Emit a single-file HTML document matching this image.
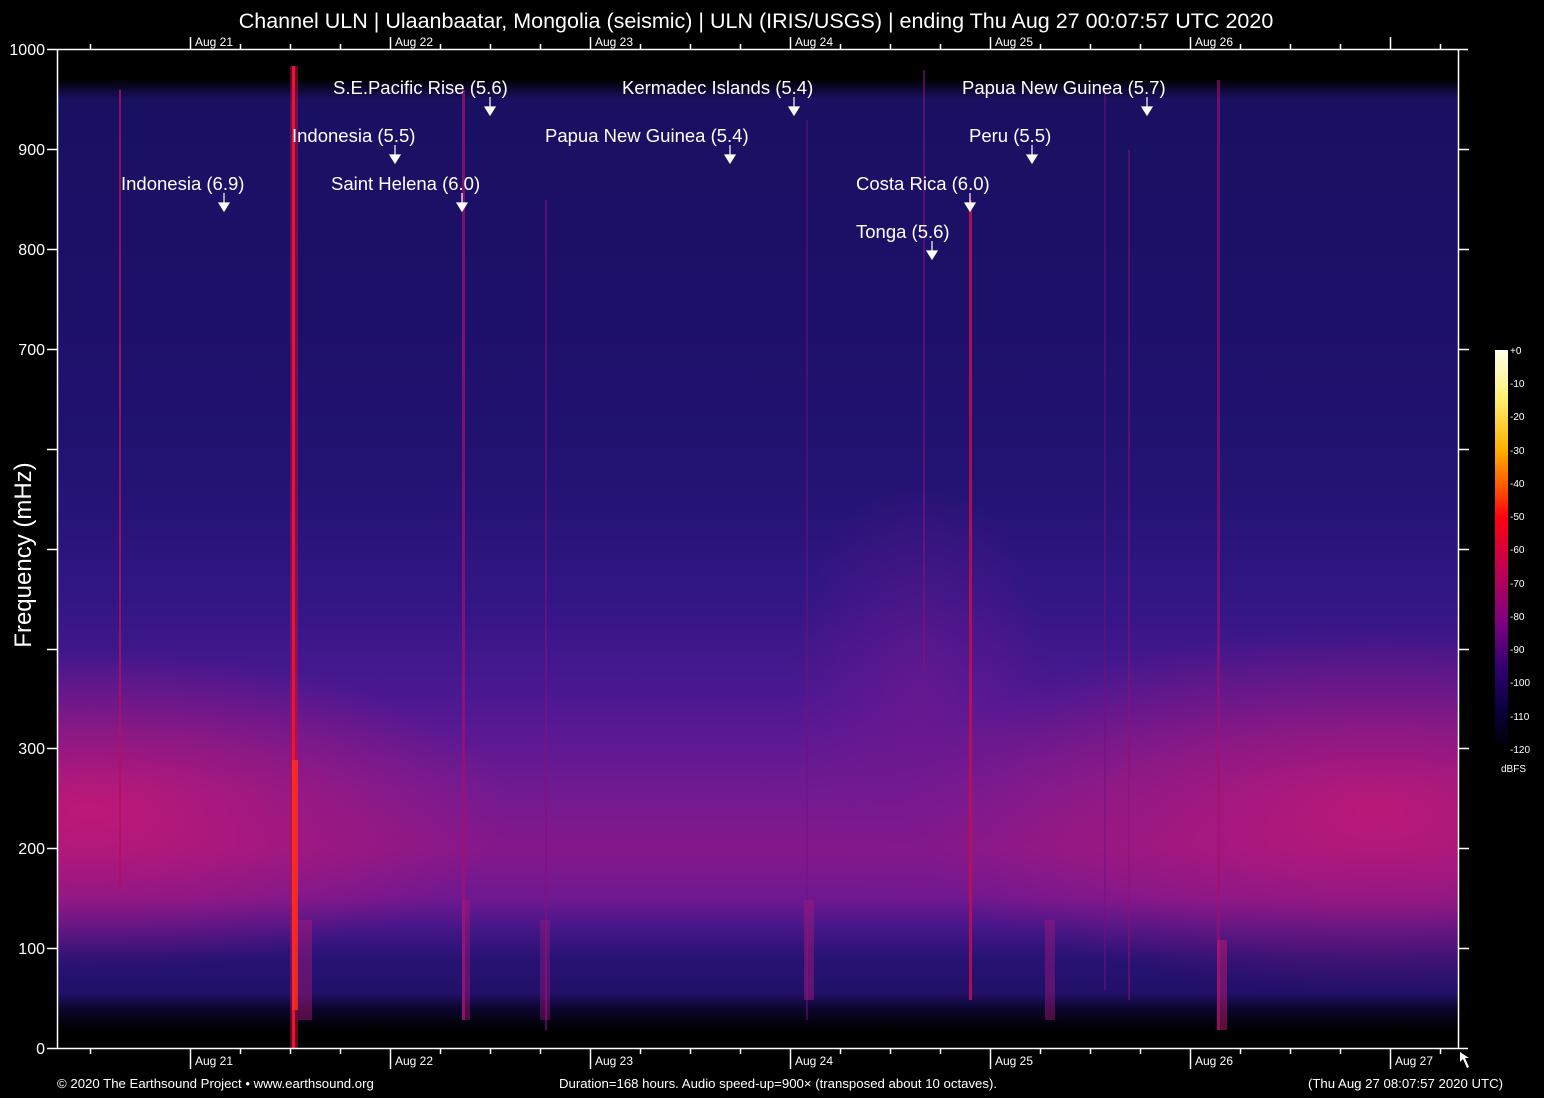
<!DOCTYPE html>
<html><head><meta charset="utf-8"><style>
html,body{margin:0;padding:0;background:#000;}
svg{display:block;}
text{font-family:"Liberation Sans",sans-serif;fill:#fff;}
</style></head><body>
<svg width="1544" height="1098" viewBox="0 0 1544 1098" xmlns="http://www.w3.org/2000/svg">
<defs>
<linearGradient id="vg" x1="0" y1="49" x2="0" y2="1048" gradientUnits="userSpaceOnUse">
<stop offset="0" stop-color="#000"/>
<stop offset="0.03" stop-color="#000"/>
<stop offset="0.05" stop-color="#1a1062"/>
<stop offset="0.25" stop-color="#1c1068"/>
<stop offset="0.42" stop-color="#221272"/>
<stop offset="0.55" stop-color="#321684"/>
<stop offset="0.65" stop-color="#4c1892"/>
<stop offset="0.74" stop-color="#701a92"/>
<stop offset="0.8" stop-color="#84188a"/>
<stop offset="0.85" stop-color="#701890"/>
<stop offset="0.88" stop-color="#461688"/>
<stop offset="0.91" stop-color="#281274"/>
<stop offset="0.945" stop-color="#221068"/>
<stop offset="0.96" stop-color="#0c0630"/>
<stop offset="0.98" stop-color="#000"/>
<stop offset="1" stop-color="#000"/>
</linearGradient>
<radialGradient id="rl" cx="90" cy="810" r="420" gradientUnits="userSpaceOnUse" gradientTransform="translate(90 810) scale(1 0.38) translate(-90 -810)">
<stop offset="0" stop-color="#d01870" stop-opacity="0.8"/>
<stop offset="1" stop-color="#d01870" stop-opacity="0"/>
</radialGradient>
<radialGradient id="rr" cx="1380" cy="810" r="480" gradientUnits="userSpaceOnUse" gradientTransform="translate(1380 810) scale(1 0.38) translate(-1380 -810)">
<stop offset="0" stop-color="#d01870" stop-opacity="0.75"/>
<stop offset="1" stop-color="#d01870" stop-opacity="0"/>
</radialGradient>
<radialGradient id="rm" cx="920" cy="700" r="220" gradientUnits="userSpaceOnUse" gradientTransform="translate(920 700) scale(0.6 1) translate(-920 -700)">
<stop offset="0" stop-color="#7a1890" stop-opacity="0.55"/>
<stop offset="1" stop-color="#7a1890" stop-opacity="0"/>
</radialGradient>
<linearGradient id="cb" x1="0" y1="350" x2="0" y2="748" gradientUnits="userSpaceOnUse">
<stop offset="0" stop-color="#fffff0"/>
<stop offset="0.12" stop-color="#fff070"/>
<stop offset="0.25" stop-color="#ffb000"/>
<stop offset="0.35" stop-color="#ff5000"/>
<stop offset="0.42" stop-color="#ff0010"/>
<stop offset="0.55" stop-color="#c00050"/>
<stop offset="0.68" stop-color="#800080"/>
<stop offset="0.8" stop-color="#300070"/>
<stop offset="0.9" stop-color="#080040"/>
<stop offset="1" stop-color="#000"/>
</linearGradient>
</defs>

<text x="756" y="28" font-size="21.5" text-anchor="middle">Channel ULN | Ulaanbaatar, Mongolia (seismic) | ULN (IRIS/USGS) | ending Thu Aug 27 00:07:57 UTC 2020</text>

<rect x="57" y="49" width="1402" height="999" fill="url(#vg)"/>
<rect x="57" y="90" width="1402" height="900" fill="url(#rl)"/>
<rect x="57" y="90" width="1402" height="900" fill="url(#rr)"/>
<rect x="57" y="90" width="1402" height="900" fill="url(#rm)"/>

<g>
<rect x="119" y="90" width="2" height="800" fill="#b01060" opacity="0.8"/>
<rect x="290" y="66" width="8" height="982" fill="#c01040" opacity="0.5"/>
<rect x="292" y="66" width="3" height="982" fill="#f01030"/>
<rect x="292" y="760" width="6" height="250" fill="#ff3020" opacity="0.8"/>
<rect x="298" y="920" width="14" height="100" fill="#b01878" opacity="0.45"/>
<rect x="462" y="90" width="3" height="930" fill="#a01070" opacity="0.75"/>
<rect x="545" y="200" width="2" height="830" fill="#801080" opacity="0.6"/>
<rect x="806" y="120" width="2" height="900" fill="#701080" opacity="0.5"/>
<rect x="804" y="900" width="10" height="100" fill="#a01878" opacity="0.5"/>
<rect x="923" y="70" width="2" height="600" fill="#801080" opacity="0.6"/>
<rect x="969" y="200" width="3" height="800" fill="#c01050" opacity="0.85"/>
<rect x="1104" y="90" width="2" height="900" fill="#701080" opacity="0.5"/>
<rect x="1128" y="150" width="2" height="850" fill="#901070" opacity="0.5"/>
<rect x="1217" y="80" width="3" height="950" fill="#a01070" opacity="0.6"/>
<rect x="1217" y="940" width="10" height="90" fill="#c01870" opacity="0.5"/>
<rect x="1045" y="920" width="10" height="100" fill="#a01878" opacity="0.45"/>
<rect x="540" y="920" width="10" height="100" fill="#a01878" opacity="0.4"/>
<rect x="462" y="900" width="8" height="120" fill="#b01878" opacity="0.4"/>
</g>

<g stroke="#fff" stroke-width="1.5" fill="none">
<line x1="57.5" y1="49" x2="57.5" y2="1048"/>
<line x1="1458.5" y1="49" x2="1458.5" y2="1048"/>
<line x1="47" y1="49.5" x2="1468" y2="49.5"/>
<line x1="47" y1="1048.5" x2="1468" y2="1048.5"/>
<path d="M47 149.5H57M47 249.5H57M47 349.5H57M47 449.5H57M47 549.5H57M47 649.5H57M47 748.5H57M47 848.5H57M47 948.5H57"/>
<path d="M1459 149.5H1469M1459 249.5H1469M1459 349.5H1469M1459 449.5H1469M1459 549.5H1469M1459 649.5H1469M1459 748.5H1469M1459 848.5H1469M1459 948.5H1469"/>
<path d="M90.5 44V49M240.5 44V49M290.5 44V49M340.5 44V49M440.5 44V49M490.5 44V49M540.5 44V49M640.5 44V49M690.5 44V49M740.5 44V49M840.5 44V49M890.5 44V49M940.5 44V49M1040.5 44V49M1090.5 44V49M1140.5 44V49M1240.5 44V49M1290.5 44V49M1340.5 44V49M1440.5 44V49"/>
<path d="M190.5 37V49M390.5 37V49M590.5 37V49M790.5 37V49M990.5 37V49M1190.5 37V49M1390.5 37V49"/>
<path d="M90.5 1049V1054M240.5 1049V1054M290.5 1049V1054M340.5 1049V1054M440.5 1049V1054M490.5 1049V1054M540.5 1049V1054M640.5 1049V1054M690.5 1049V1054M740.5 1049V1054M840.5 1049V1054M890.5 1049V1054M940.5 1049V1054M1040.5 1049V1054M1090.5 1049V1054M1140.5 1049V1054M1240.5 1049V1054M1290.5 1049V1054M1340.5 1049V1054M1440.5 1049V1054"/>
<path d="M190.5 1049V1069M390.5 1049V1069M590.5 1049V1069M790.5 1049V1069M990.5 1049V1069M1190.5 1049V1069M1390.5 1049V1069"/>
</g>
<path d="M1460 1052 L1460 1062 L1463 1059 L1467 1068 L1469 1067 L1465 1058 L1469 1058 Z" fill="#fff"/>

<g font-size="16" text-anchor="end">
<text x="45" y="55">1000</text>
<text x="45" y="155">900</text>
<text x="45" y="255">800</text>
<text x="45" y="355">700</text>
<text x="45" y="754">300</text>
<text x="45" y="854">200</text>
<text x="45" y="954">100</text>
<text x="45" y="1054">0</text>
</g>
<text transform="translate(31 555) rotate(-90)" font-size="24" text-anchor="middle">Frequency (mHz)</text>

<g font-size="12">
<text x="195" y="46">Aug 21</text><text x="395" y="46">Aug 22</text><text x="595" y="46">Aug 23</text>
<text x="795" y="46">Aug 24</text><text x="995" y="46">Aug 25</text><text x="1195" y="46">Aug 26</text>
<text x="195" y="1065">Aug 21</text><text x="395" y="1065">Aug 22</text><text x="595" y="1065">Aug 23</text>
<text x="795" y="1065">Aug 24</text><text x="995" y="1065">Aug 25</text><text x="1195" y="1065">Aug 26</text>
<text x="1395" y="1065">Aug 27</text>
</g>

<g font-size="18.5">
<text x="121" y="190">Indonesia (6.9)</text>
<text x="333" y="94">S.E.Pacific Rise (5.6)</text>
<text x="292" y="142">Indonesia (5.5)</text>
<text x="331" y="190">Saint Helena (6.0)</text>
<text x="622" y="94">Kermadec Islands (5.4)</text>
<text x="545" y="142">Papua New Guinea (5.4)</text>
<text x="856" y="190">Costa Rica (6.0)</text>
<text x="856" y="238">Tonga (5.6)</text>
<text x="962" y="94">Papua New Guinea (5.7)</text>
<text x="969" y="142">Peru (5.5)</text>
</g>
<g fill="#fff" stroke="#fff" stroke-width="1.2">
<path d="M224 193V203"/><path d="M219 203H229L224 211Z"/>
<path d="M490 97V107"/><path d="M485 107H495L490 115Z"/>
<path d="M395 145V155"/><path d="M390 155H400L395 163Z"/>
<path d="M462 193V203"/><path d="M457 203H467L462 211Z"/>
<path d="M794 97V107"/><path d="M789 107H799L794 115Z"/>
<path d="M730 145V155"/><path d="M725 155H735L730 163Z"/>
<path d="M970 193V203"/><path d="M965 203H975L970 211Z"/>
<path d="M932 241V251"/><path d="M927 251H937L932 259Z"/>
<path d="M1147 97V107"/><path d="M1142 107H1152L1147 115Z"/>
<path d="M1032 145V155"/><path d="M1027 155H1037L1032 163Z"/>
</g>

<rect x="1495" y="350" width="13" height="398" fill="url(#cb)"/>
<g font-size="10" fill="#ddd">
<text x="1510" y="354">+0</text><text x="1510" y="387">-10</text><text x="1510" y="420">-20</text>
<text x="1510" y="454">-30</text><text x="1510" y="487">-40</text><text x="1510" y="520">-50</text>
<text x="1510" y="553">-60</text><text x="1510" y="587">-70</text><text x="1510" y="620">-80</text>
<text x="1510" y="653">-90</text><text x="1510" y="686">-100</text><text x="1510" y="720">-110</text>
<text x="1510" y="753">-120</text><text x="1501" y="772">dBFS</text>
</g>

<g font-size="13.2">
<text x="57" y="1088">© 2020 The Earthsound Project • www.earthsound.org</text>
<text x="778" y="1088" text-anchor="middle">Duration=168 hours. Audio speed-up=900× (transposed about 10 octaves).</text>
<text x="1503" y="1088" text-anchor="end">(Thu Aug 27 08:07:57 2020 UTC)</text>
</g>
</svg>
</body></html>
